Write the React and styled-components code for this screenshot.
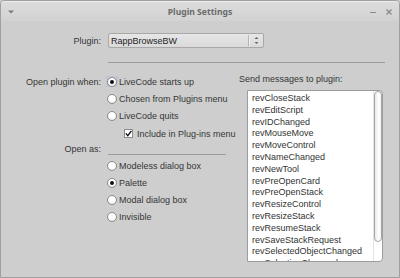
import styled, { createGlobalStyle } from 'styled-components'

const GlobalStyle = createGlobalStyle`
  html, body {
    margin: 0;
    padding: 0;
    background: #cecece;
  }
  body {
    font-family: "Liberation Sans", Arial, sans-serif;
  }
`

const Window = styled.div`
  width: 400px;
  height: 278px;
  box-sizing: border-box;
  border: 1px solid #a0a0a0;
  border-radius: 4px 4px 0 0;
  background: #cecece;
  display: flex;
  flex-direction: column;
  overflow: hidden;
  color: #363636;
  font-size: 9px;
`

const TitleBar = styled.div`
  height: 20px;
  flex: none;
  display: flex;
  align-items: center;
  background: linear-gradient(#dcdcdc, #d2d2d2);
  border-top: 1px solid #ececec;
  box-sizing: border-box;
`

const TitleSide = styled.div`
  width: ${(p) => p.$w}px;
  display: flex;
  align-items: center;
  gap: 8px;
  padding-left: ${(p) => p.$pl || 0}px;
  box-sizing: border-box;
`

const Title = styled.div`
  flex: 1;
  text-align: center;
  font-family: "Noto Sans", "DejaVu Sans", sans-serif;
  font-weight: bold;
  font-size: 8.6px;
  color: #6a6a6a;
`

const Content = styled.div`
  padding-top: 12px;
  display: flex;
  flex-direction: column;
`

const PluginRow = styled.div`
  display: flex;
  align-items: center;
  height: 15px;
`

const Label = styled.div`
  width: 100px;
  text-align: right;
  flex: none;
`

const Popup = styled.div`
  margin-left: 7px;
  width: 156px;
  height: 15px;
  box-sizing: border-box;
  border: 1px solid #a8a8a8;
  border-radius: 2px;
  background: linear-gradient(#e6e6e6, #dadada);
  display: flex;
  align-items: center;
  color: #222;
`

const PopupText = styled.div`
  flex: 1;
  padding-left: 2px;
`

const PopupArrows = styled.div`
  width: 14px;
  height: 11px;
  border-left: 1px solid #b4b4b4;
  box-shadow: inset 1px 0 0 #f0f0f0;
  display: flex;
  align-items: center;
  justify-content: center;
`

const Divider = styled.div`
  margin: 14px 0 0 107px;
  width: 277px;
  height: 1px;
  background: #9c9c9c;
`

const Main = styled.div`
  display: flex;
  margin-top: 10px;
`

const LeftCol = styled.div`
  width: 237px;
  flex: none;
  display: flex;
  flex-direction: column;
`

const OptionRow = styled.div`
  display: grid;
  grid-template-columns: 100px auto;
  column-gap: 5px;
  align-items: center;
  height: ${(p) => p.$h || 17}px;
  margin-top: ${(p) => p.$mt || 0}px;
`

const Choice = styled.div`
  grid-column: 2;
  display: flex;
  align-items: center;
  gap: 1px;
  margin-left: ${(p) => p.$indent || 0}px;
`

const RadioBox = styled.div`
  width: 12px;
  height: 11px;
  display: flex;
  align-items: center;
  justify-content: center;
  background: ${(p) => (p.$focus ? '#bfc6d1' : 'transparent')};
`

const Radio = styled.div`
  width: 10px;
  height: 10px;
  box-sizing: border-box;
  border-radius: 50%;
  border: 1px solid #8c8c8c;
  background: radial-gradient(circle at 50% 35%, #ffffff 40%, #e2e2e2);
  display: flex;
  align-items: center;
  justify-content: center;

  &::after {
    content: '';
    width: 4px;
    height: 4px;
    border-radius: 50%;
    background: #111;
    display: ${(p) => (p.$on ? 'block' : 'none')};
  }
`

const CheckBox = styled.div`
  width: 9px;
  height: 9px;
  box-sizing: border-box;
  border: 1px solid #8c8c8c;
  background: #fff;
  margin-right: 3px;
  display: flex;
  align-items: center;
  justify-content: center;
`

const RuleCell = styled.div`
  grid-column: 2;
  align-self: end;
  margin-left: 2px;
  width: 118px;
  height: 1px;
  background: #9c9c9c;
`

const RightCol = styled.div`
  flex: 1;
  display: flex;
  flex-direction: column;
`

const Heading = styled.div`
  height: 12px;
  line-height: 12px;
  padding-left: 1px;
`

const ListBox = styled.div`
  margin: 5px 0 0 9px;
  width: 136px;
  height: 172px;
  box-sizing: border-box;
  border: 1px solid #9c9c9c;
  border-radius: 0 4px 4px 0;
  background: #fff;
  display: flex;
  overflow: hidden;
`

const Items = styled.div`
  flex: 1;
  padding: 2px 0 0 4px;
  line-height: 11.8px;
  color: #333;
  white-space: nowrap;
  overflow: hidden;
`

const ScrollTrack = styled.div`
  width: 9px;
  flex: none;
  border-left: 1px solid #e4e4e4;
  box-sizing: border-box;
`

const Thumb = styled.div`
  width: 8px;
  height: 151px;
  box-sizing: border-box;
  border: 1px solid #a6a6a6;
  border-radius: 4px;
  background: linear-gradient(90deg, #e8e8e8, #ffffff 60%, #f2f2f2);
`

const messages = [
  'revCloseStack',
  'revEditScript',
  'revIDChanged',
  'revMouseMove',
  'revMoveControl',
  'revNameChanged',
  'revNewTool',
  'revPreOpenCard',
  'revPreOpenStack',
  'revResizeControl',
  'revResizeStack',
  'revResumeStack',
  'revSaveStackRequest',
  'revSelectedObjectChanged',
  'revSelectionChanged',
]

function RadioOption({ label, on, focus, title }) {
  return (
    <OptionRow>
      {title && <Label>{title}</Label>}
      <Choice>
        <RadioBox $focus={focus}>
          <Radio $on={on} />
        </RadioBox>
        {label}
      </Choice>
    </OptionRow>
  )
}

export default function App() {
  return (
    <>
      <GlobalStyle />
      <Window>
        <TitleBar>
          <TitleSide $w={40} $pl={7}>
            <svg width="6" height="4" viewBox="0 0 6 4">
              <path d="M0 0.5 L6 0.5 L3 3.5 Z" fill="#7a7a7a" />
            </svg>
          </TitleSide>
          <Title>Plugin Settings</Title>
          <TitleSide $w={40} $pl={10}>
            <svg width="8" height="8" viewBox="0 0 8 8">
              <path d="M1 4.5 H7" stroke="#8a8a8a" strokeWidth="1.2" />
            </svg>
            <svg width="8" height="8" viewBox="0 0 8 8">
              <path d="M1.5 1.5 L6.5 6.5 M6.5 1.5 L1.5 6.5" stroke="#8a8a8a" strokeWidth="1.3" />
            </svg>
          </TitleSide>
        </TitleBar>
        <Content>
          <PluginRow>
            <Label>Plugin:</Label>
            <Popup>
              <PopupText>RappBrowseBW</PopupText>
              <PopupArrows>
                <svg width="5" height="9" viewBox="0 0 5 9">
                  <path d="M0.5 3 L2.5 1 L4.5 3 Z M0.5 6 L2.5 8 L4.5 6 Z" fill="#666" />
                </svg>
              </PopupArrows>
            </Popup>
          </PluginRow>
          <Divider />
          <Main>
            <LeftCol>
              <RadioOption title="Open plugin when:" label="LiveCode starts up" on focus />
              <RadioOption label="Chosen from Plugins menu" />
              <RadioOption label="LiveCode quits" />
              <OptionRow $h={19}>
                <Choice $indent={18}>
                  <CheckBox>
                    <svg width="7" height="7" viewBox="0 0 7 7">
                      <path d="M0.8 3.4 L2.8 5.6 L6.4 0.8" stroke="#111" strokeWidth="1.4" fill="none" />
                    </svg>
                  </CheckBox>
                  Include in Plug-ins menu
                </Choice>
              </OptionRow>
              <OptionRow $h={12}>
                <Label>Open as:</Label>
                <RuleCell />
              </OptionRow>
              <OptionRow $mt={2}>
                <Choice>
                  <RadioBox>
                    <Radio />
                  </RadioBox>
                  Modeless dialog box
                </Choice>
              </OptionRow>
              <RadioOption label="Palette" on />
              <RadioOption label="Modal dialog box" />
              <RadioOption label="Invisible" />
            </LeftCol>
            <RightCol>
              <Heading>Send messages to plugin:</Heading>
              <ListBox>
                <Items>
                  {messages.map((m) => (
                    <div key={m}>{m}</div>
                  ))}
                </Items>
                <ScrollTrack>
                  <Thumb />
                </ScrollTrack>
              </ListBox>
            </RightCol>
          </Main>
        </Content>
      </Window>
    </>
  )
}
